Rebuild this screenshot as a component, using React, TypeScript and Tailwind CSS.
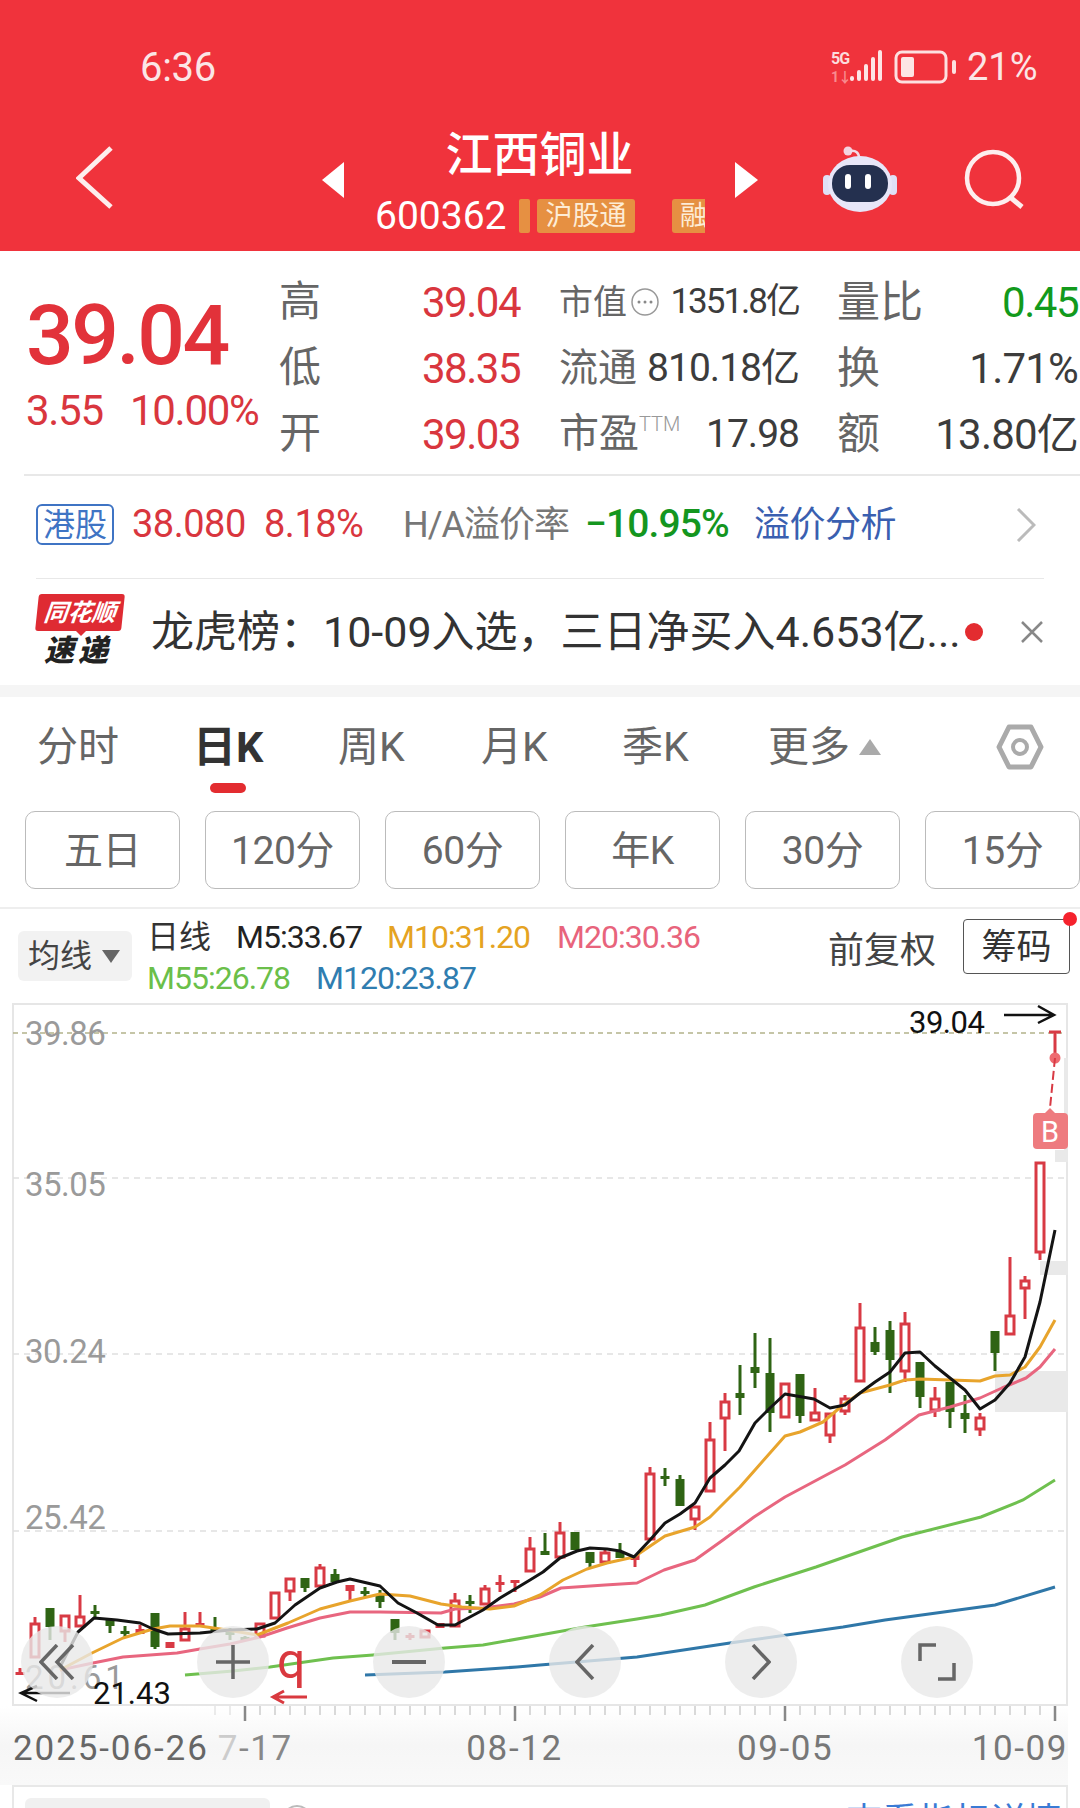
import type { ReactNode } from "react";

type Candle = [number, "r" | "g", number, number, number, number];

// wick top, body top, body bottom, wick bottom (page y). x = 20 + 15 * k
const candles: Candle[] = [
  [0, "r", 1668, 1672, 1675, 1675],
  [1, "r", 1617, 1623, 1658, 1658],
  [2, "g", 1608, 1608, 1627, 1640],
  [3, "r", 1615, 1615, 1632, 1642],
  [4, "r", 1595, 1616, 1627, 1627],
  [5, "g", 1605, 1611, 1613, 1618],
  [6, "g", 1619, 1619, 1626, 1633],
  [7, "g", 1626, 1631, 1633, 1637],
  [8, "r", 1625, 1629, 1634, 1634],
  [9, "g", 1613, 1613, 1647, 1649],
  [10, "r", 1642, 1642, 1648, 1648],
  [11, "r", 1612, 1628, 1641, 1641],
  [12, "r", 1612, 1623, 1625, 1625],
  [13, "g", 1617, 1628, 1630, 1630],
  [14, "g", 1628, 1632, 1635, 1640],
  [15, "g", 1636, 1637, 1639, 1640],
  [16, "r", 1623, 1623, 1637, 1637],
  [17, "r", 1592, 1592, 1619, 1619],
  [18, "r", 1578, 1578, 1592, 1601],
  [19, "g", 1578, 1578, 1588, 1592],
  [20, "r", 1564, 1567, 1587, 1587],
  [21, "g", 1569, 1574, 1582, 1582],
  [22, "r", 1585, 1585, 1591, 1600],
  [23, "g", 1587, 1591, 1593, 1597],
  [24, "g", 1590, 1595, 1602, 1608],
  [25, "g", 1619, 1619, 1633, 1640],
  [26, "r", 1633, 1635, 1638, 1640],
  [27, "r", 1630, 1630, 1638, 1638],
  [28, "r", 1623, 1623, 1628, 1628],
  [29, "r", 1593, 1600, 1627, 1627],
  [30, "g", 1595, 1601, 1603, 1613],
  [31, "r", 1585, 1588, 1605, 1605],
  [32, "r", 1575, 1582, 1584, 1592],
  [33, "r", 1580, 1580, 1582, 1592],
  [34, "r", 1537, 1548, 1572, 1572],
  [35, "g", 1533, 1551, 1555, 1555],
  [36, "r", 1522, 1532, 1558, 1558],
  [37, "g", 1532, 1532, 1550, 1550],
  [38, "g", 1552, 1552, 1563, 1567],
  [39, "r", 1548, 1552, 1563, 1563],
  [40, "g", 1543, 1552, 1558, 1558],
  [41, "r", 1555, 1555, 1560, 1567],
  [42, "r", 1467, 1473, 1540, 1540],
  [43, "g", 1468, 1476, 1478, 1486],
  [44, "g", 1475, 1479, 1506, 1506],
  [45, "r", 1506, 1506, 1520, 1530],
  [46, "r", 1422, 1439, 1492, 1492],
  [47, "r", 1393, 1401, 1419, 1451],
  [48, "g", 1365, 1393, 1398, 1415],
  [49, "g", 1333, 1367, 1373, 1388],
  [50, "g", 1338, 1373, 1413, 1432],
  [51, "r", 1383, 1383, 1418, 1418],
  [52, "g", 1374, 1374, 1416, 1423],
  [53, "r", 1388, 1412, 1421, 1421],
  [54, "r", 1413, 1413, 1436, 1443],
  [55, "r", 1395, 1398, 1412, 1415],
  [56, "r", 1303, 1327, 1382, 1382],
  [57, "g", 1327, 1342, 1352, 1355],
  [58, "g", 1321, 1330, 1360, 1393],
  [59, "r", 1312, 1323, 1372, 1382],
  [60, "g", 1362, 1362, 1397, 1408],
  [61, "r", 1387, 1398, 1411, 1417],
  [62, "g", 1382, 1382, 1412, 1428],
  [63, "g", 1395, 1413, 1419, 1433],
  [64, "r", 1413, 1417, 1430, 1436],
  [65, "g", 1331, 1331, 1353, 1371],
  [66, "r", 1257, 1315, 1335, 1335],
  [67, "r", 1276, 1280, 1289, 1319],
  [68, "r", 1162, 1162, 1253, 1260],
];

const ma5 = "60,1667 78,1632 94,1618 117,1620 140,1623 153,1629 168,1634 200,1633 230,1630 257,1629 275,1623 295,1605 320,1588 337,1582 350,1579 380,1586 398,1603 417,1613 438,1625 455,1625 483,1610 500,1598 530,1580 543,1572 560,1558 577,1551 590,1548 607,1549 620,1551 634,1557 650,1540 665,1523 680,1514 695,1503 710,1478 725,1465 739,1451 755,1423 770,1408 785,1394 814,1399 830,1408 845,1405 860,1393 875,1382 890,1372 905,1353 920,1352 935,1366 950,1378 965,1390 980,1409 995,1400 1010,1383 1025,1357 1040,1302 1055,1230";
const ma10 = "60,1670 92,1653 123,1638 153,1629 170,1626 200,1626 227,1630 257,1635 288,1623 320,1609 350,1601 380,1594 410,1596 441,1604 462,1607 490,1609 514,1606 540,1595 563,1580 587,1569 607,1563 634,1557 665,1536 695,1527 710,1517 740,1487 755,1470 785,1436 800,1432 823,1422 843,1405 860,1393 890,1385 905,1380 920,1379 950,1380 980,1381 995,1376 1010,1375 1025,1367 1040,1347 1055,1320";
const ma20 = "60,1670 93,1663 123,1657 177,1653 200,1649 230,1644 260,1637 287,1628 320,1618 350,1612 380,1612 441,1613 455,1609 483,1608 514,1604 540,1597 561,1588 605,1585 637,1583 664,1570 695,1560 723,1540 754,1517 785,1497 845,1465 885,1440 919,1415 950,1407 980,1398 1002,1388 1026,1378 1040,1367 1055,1349";
const ma55 = "185,1675 233,1671 270,1667 333,1658 373,1655 445,1648 483,1645 540,1635 585,1627 637,1619 661,1615 705,1605 754,1587 816,1567 902,1537 981,1517 1023,1500 1055,1480";
const ma120 = "365,1675 445,1672 517,1667 540,1665 637,1657 730,1643 843,1627 885,1620 995,1605 1055,1587";

const priceLabels: [string, number, string][] = [
  ["39.86", 1045, "#9a9a9a"],
  ["35.05", 1196, "#9a9a9a"],
  ["30.24", 1363, "#9a9a9a"],
  ["25.42", 1529, "#9a9a9a"],
];

function CandleMark({ c }: { c: Candle }) {
  const [k, kind, hi, top, bottom, lo] = c;
  const x = 20 + 15 * k;
  const color = kind === "r" ? "#d83a44" : "#2f6414";
  const flat = bottom - top < 8;
  return (
    <g>
      <line x1={x} x2={x} y1={hi} y2={lo} stroke={color} strokeWidth={3} />
      {kind === "g" || flat ? (
        <rect x={x - 4.5} y={top} width={9} height={Math.max(bottom - top, 3)} fill={color} />
      ) : (
        <rect x={x - 4} y={top + 1} width={8} height={bottom - top - 2} fill="#fff" stroke={color} strokeWidth={3} />
      )}
    </g>
  );
}

function StatRow({ label, value, mid, right }: { label: string; value: string; mid: ReactNode; right: ReactNode }) {
  return (
    <div className="flex h-[66px] items-center">
      <span className="w-[143px] text-[42px] leading-none text-[#666]">{label}</span>
      <span className="w-[137px] text-[42px] tracking-[-1.5px] text-[#d9363e]">{value}</span>
      <div className="flex w-[240px] items-center justify-between">{mid}</div>
      <div className="ml-[38px] flex w-[241px] items-center justify-between">{right}</div>
    </div>
  );
}

function StatusBar() {
  return (
    <div className="flex h-[40px] items-center pl-[140px] text-[#fbe6e6]">
      <span className="mt-[2px] w-[689px] text-[40px] leading-none tracking-[-0.3px]">6:36</span>
      <svg width="56" height="34" viewBox="0 0 56 34" className="ml-[1px]">
        <text x="1" y="14" fontSize="16" fontWeight="700" fill="#fbdcdc" letterSpacing="-1">5G</text>
        <text x="1" y="32" fontSize="14" fontWeight="700" fill="#f88b8f" letterSpacing="-1">1↓</text>
        <g fill="#fde5e5">
          <rect x="20" y="26" width="4" height="5" rx="2" />
          <rect x="27" y="20" width="4" height="11" rx="2" />
          <rect x="34" y="14" width="4" height="17" rx="2" />
          <rect x="41" y="7" width="4" height="24" rx="2" />
          <rect x="48" y="0" width="4" height="31" rx="2" />
        </g>
      </svg>
      <svg width="66" height="36" viewBox="0 0 66 36" className="ml-[8px]">
        <rect x="2" y="3" width="50" height="30" rx="6" fill="none" stroke="#fde0e0" strokeWidth="3" />
        <rect x="7" y="8" width="13" height="20" rx="2" fill="#fde5e5" />
        <rect x="58" y="11" width="4" height="14" rx="2" fill="#fde0e0" />
      </svg>
      <span className="ml-[7px] text-[38px] leading-none">21%</span>
    </div>
  );
}

function NavBar() {
  return (
    <div className="mt-[13px] flex h-[151px]">
      <svg width="37" height="63" viewBox="0 0 37 63" className="ml-[76px] mt-[46px]">
        <path d="M35 2 L3 32 L35 61" fill="none" stroke="#fdeeee" strokeWidth="5" />
      </svg>
      <svg width="22" height="36" viewBox="0 0 22 36" className="ml-[209px] mt-[62px]">
        <path d="M22 0 V36 L0 18 Z" fill="#fff" />
      </svg>
      <div className="w-[391px]">
        <div className="mt-[31px] text-center text-[47px] font-medium leading-none text-white">江西铜业</div>
        <div className="mt-[21px] flex h-[34px] items-center pl-[31px]">
          <span className="w-[144px] text-[39px] leading-none text-white">600362</span>
          <span className="h-[34px] w-[11px] rounded-[2px] bg-[#e69042]" />
          <span className="ml-[7px] flex h-[34px] w-[98px] items-center justify-center rounded-[3px] bg-[#e69042] text-[27px] text-[#fdecd6]">
            沪股通
          </span>
          <span className="ml-[37px] flex h-[34px] w-[33px] items-center overflow-hidden rounded-l-[3px] bg-[#e69042] pl-[8px] text-[27px] text-[#fdecd6]">
            <span className="shrink-0">融</span>
          </span>
        </div>
      </div>
      <svg width="23" height="36" viewBox="0 0 23 36" className="mt-[62px]">
        <path d="M0 0 V36 L23 18 Z" fill="#fff" />
      </svg>
      <svg width="76" height="68" viewBox="0 0 76 68" className="ml-[64px] mt-[45px]">
        <circle cx="26" cy="6" r="4.5" fill="#f3d4e0" />
        <path d="M28 6 C34 5 37 8 37 13" fill="none" stroke="#f3dbe6" strokeWidth="2.5" />
        <rect x="1" y="30" width="8" height="20" rx="4" fill="#dfe0f6" />
        <rect x="67" y="30" width="8" height="20" rx="4" fill="#dfe0f6" />
        <ellipse cx="38" cy="39" rx="32" ry="28" fill="#e7e6f8" />
        <rect x="10" y="20" width="56" height="37" rx="18" fill="#24304f" />
        <rect x="23" y="29" width="6" height="15" rx="3" fill="#fff" />
        <rect x="43" y="29" width="6" height="15" rx="3" fill="#fff" />
      </svg>
      <svg width="62" height="62" viewBox="0 0 62 62" className="ml-[66px] mt-[47px]">
        <circle cx="29" cy="31" r="26" fill="none" stroke="#fdeeee" strokeWidth="4.5" />
        <path d="M46 50 L58 60" stroke="#fdeeee" strokeWidth="5" />
      </svg>
    </div>
  );
}

function QuoteBlock() {
  const dark = "text-[39px] tracking-[-1px] text-[#3c3c3c]";
  return (
    <div className="flex h-[223px] pl-[26px]">
      <div className="w-[253px]">
        <div className="mt-[43px] text-[84px] font-medium leading-none tracking-[-2.5px] text-[#e2323a]">39.04</div>
        <div className="mt-[11px] flex text-[42px] leading-[44px] tracking-[-1.3px] text-[#d9363e]">
          <span className="w-[104px]">3.55</span>
          <span>10.00%</span>
        </div>
      </div>
      <div className="mt-[18px] w-[799px]">
        <StatRow
          label="高"
          value="39.04"
          mid={
            <>
              <span className="flex items-center text-[34px] text-[#666]">
                市值
                <svg width="30" height="30" viewBox="0 0 30 30" className="ml-[3px]">
                  <circle cx="15" cy="15" r="13" fill="none" stroke="#999" strokeWidth="1.5" />
                  <circle cx="9" cy="15" r="1.5" fill="#888" />
                  <circle cx="15" cy="15" r="1.5" fill="#888" />
                  <circle cx="21" cy="15" r="1.5" fill="#888" />
                </svg>
              </span>
              <span className="text-[35px] tracking-[-2px] text-[#3c3c3c]">1351.8亿</span>
            </>
          }
          right={
            <>
              <span className="text-[43px] text-[#666]">量比</span>
              <span className="text-[42px] tracking-[-1.5px] text-[#129a1c]">0.45</span>
            </>
          }
        />
        <StatRow
          label="低"
          value="38.35"
          mid={
            <>
              <span className="text-[39px] text-[#666]">流通</span>
              <span className={dark}>810.18亿</span>
            </>
          }
          right={
            <>
              <span className="text-[43px] text-[#666]">换</span>
              <span className="text-[42px] tracking-[-0.8px] text-[#3c3c3c]">1.71%</span>
            </>
          }
        />
        <StatRow
          label="开"
          value="39.03"
          mid={
            <>
              <span className="flex items-start text-[40px] leading-none text-[#666]">
                市盈
                <span className="text-[20px] font-light text-[#999]">TTM</span>
              </span>
              <span className={dark}>17.98</span>
            </>
          }
          right={
            <>
              <span className="text-[43px] text-[#666]">额</span>
              <span className="text-[42px] tracking-[-0.8px] text-[#3c3c3c]">13.80亿</span>
            </>
          }
        />
      </div>
    </div>
  );
}

function HkRow() {
  return (
    <div className="flex h-[102px] items-center pb-[5px] pl-[36px]">
      <span className="flex h-[41px] w-[78px] items-center justify-center rounded-[6px] border-2 border-[#3f74c4] text-[32px] leading-none text-[#3f74c4]">
        港股
      </span>
      <span className="ml-[18px] w-[132px] text-[38px] tracking-[-0.5px] text-[#d9363e]">38.080</span>
      <span className="w-[139px] text-[38px] tracking-[-0.5px] text-[#d9363e]">8.18%</span>
      <span className="w-[182px] whitespace-nowrap text-[36px] tracking-[-1px] text-[#777]">H/A溢价率</span>
      <span className="w-[169px] text-[39px] font-medium tracking-[-0.9px] text-[#14961f]">−10.95%</span>
      <span className="w-[262px] text-[36px] tracking-[-0.5px] text-[#3a5fb0]">溢价分析</span>
      <svg width="20" height="34" viewBox="0 0 20 34">
        <path d="M2 1 L18 17 L2 33" fill="none" stroke="#bbb" strokeWidth="3" />
      </svg>
    </div>
  );
}

function NewsRow() {
  return (
    <div className="flex h-[106px] items-center pl-[37px]">
      <div className="relative h-[76px] w-[90px] shrink-0">
        <div className="flex h-[37px] w-[86px] -skew-x-6 items-center justify-center rounded-[3px] bg-[#df2b33] text-[24px] font-bold italic leading-none text-white">
          同花顺
        </div>
        <div className="absolute left-[38px] top-[36px] h-0 w-0 border-x-[6px] border-t-[6px] border-x-transparent border-t-[#df2b33]" />
        <div className="mt-[5px] pl-[7px] text-[30px] font-black italic leading-none tracking-[4px] text-[#222]">速递</div>
      </div>
      <span className="ml-[24px] w-[814px] whitespace-nowrap text-[43px] text-[#333]">龙虎榜：10-09入选，三日净买入4.653亿...</span>
      <span className="h-[18px] w-[18px] rounded-full bg-[#e32c30]" />
      <svg width="22" height="22" viewBox="0 0 22 22" className="ml-[38px]">
        <path d="M1 1 L21 21 M21 1 L1 21" stroke="#888" strokeWidth="2.5" />
      </svg>
    </div>
  );
}

function PeriodTabs() {
  const tab = "text-[41px] leading-none text-[#666]";
  return (
    <div className="relative flex h-[114px] pb-[14px]">
      <div className="flex h-[100px] w-full items-center">
        <span className={`ml-[37px] w-[156px] ${tab}`}>分时</span>
        <span className="w-[145px] text-[43px] font-bold leading-none text-[#333]">日K</span>
        <span className={`w-[143px] ${tab}`}>周K</span>
        <span className={`w-[141px] ${tab}`}>月K</span>
        <span className={`w-[146px] ${tab}`}>季K</span>
        <span className={`w-[91px] ${tab}`}>更多</span>
        <span className="h-0 w-0 border-x-[11px] border-b-[16px] border-x-transparent border-b-[#aaa]" />
        <svg width="48" height="46" viewBox="0 0 48 46" className="ml-[115px]">
          <path d="M13 3 H35 L45 23 L35 43 H13 L3 23 Z" fill="none" stroke="#aaa" strokeWidth="5" strokeLinejoin="round" />
          <circle cx="24" cy="23" r="7" fill="none" stroke="#aaa" strokeWidth="4" />
        </svg>
      </div>
      <span className="absolute left-[210px] top-[86px] h-[10px] w-[36px] rounded-full bg-[#e32c30]" />
    </div>
  );
}

function IntervalButtons() {
  return (
    <div className="flex gap-[25px] pl-[25px]">
      {["五日", "120分", "60分", "年K", "30分", "15分"].map((t) => (
        <div
          key={t}
          className="flex h-[78px] w-[155px] shrink-0 items-center justify-center rounded-[10px] border border-[#bbb] pt-[3px] text-[39px] tracking-[-0.5px] text-[#666]"
        >
          {t}
        </div>
      ))}
    </div>
  );
}

function IndicatorBar() {
  return (
    <div className="mt-[18px] flex h-[96px] border-t-2 border-[#eee] text-[32px] tracking-[-1px]">
      <div className="ml-[18px] mt-[22px] flex h-[50px] w-[114px] items-center rounded-[6px] bg-[#f2f2f2] pl-[10px]">
        <span className="w-[74px] text-[32px] tracking-normal text-[#444]">均线</span>
        <span className="h-0 w-0 border-x-[9px] border-t-[13px] border-x-transparent border-t-[#666]" />
      </div>
      <div className="ml-[15px] mt-[8px] w-[562px]">
        <div className="flex leading-[40px]">
          <span className="w-[89px] text-[32px] tracking-normal text-[#333]">日线</span>
          <span className="w-[151px] text-[#222]">M5:33.67</span>
          <span className="w-[170px] text-[#e5a322]">M10:31.20</span>
          <span className="text-[#e8647c]">M20:30.36</span>
        </div>
        <div className="flex leading-[42px]">
          <span className="w-[169px] text-[#6bbf4a]">M55:26.78</span>
          <span className="text-[#2f7db0]">M120:23.87</span>
        </div>
      </div>
      <span className="ml-[119px] mt-[15px] text-[36px] tracking-normal text-[#444]">前复权</span>
      <div className="relative ml-[27px] mt-[10px] flex h-[55px] w-[107px] items-center justify-center rounded-[4px] border border-[#555] pt-[3px] text-[35px] tracking-normal text-[#333]">
        筹码
        <span className="absolute -right-[8px] -top-[8px] h-[14px] w-[14px] rounded-full bg-[#f5222d]" />
      </div>
    </div>
  );
}

function ChartButton({ left, children }: { left: string; children: ReactNode }) {
  return (
    <div className={`absolute top-[623px] flex h-[72px] w-[72px] items-center justify-center rounded-full bg-[#e8e8e8]/80 ${left}`}>
      {children}
    </div>
  );
}

function Chart() {
  return (
    <div className="relative h-[703px] w-[1080px]">
      <svg width="1080" height="703" viewBox="0 1003 1080 703" className="block">
        <path d="M13 1706 V1004 H1067 V1706 M13 1705 H1067" fill="none" stroke="#e6e6e6" strokeWidth="2" />
        {[1178, 1354, 1531].map((y) => (
          <line key={y} x1="13" x2="1066" y1={y} y2={y} stroke="#e0e0e0" strokeWidth="1.5" strokeDasharray="6 5" />
        ))}
        <g fill="#e9e9e9">
          <rect x="1064" y="1058" width="4" height="104" />
          <rect x="1055" y="1150" width="13" height="12" />
          <rect x="1040" y="1261" width="28" height="14" />
          <rect x="995" y="1371" width="73" height="41" />
        </g>
        <line x1="13" x2="1066" y1="1033" y2="1033" stroke="#b3b38a" strokeWidth="1.5" strokeDasharray="5 4" />
        {priceLabels.map(([t, y, c]) => (
          <text key={t} x="25" y={y} fontSize="33" fill={c} letterSpacing="-0.5">
            {t}
          </text>
        ))}
        <text x="25" y="1689" fontSize="33" fill="#9a9a9a" letterSpacing="4">
          20.61
        </text>
        {candles.map((c) => (
          <CandleMark key={c[0]} c={c} />
        ))}
        <polyline points={ma120} fill="none" stroke="#2f77a8" strokeWidth="3" />
        <polyline points={ma55} fill="none" stroke="#6fc04f" strokeWidth="3" />
        <polyline points={ma20} fill="none" stroke="#e8667f" strokeWidth="3" strokeLinejoin="round" />
        <polyline points={ma10} fill="none" stroke="#e8a42c" strokeWidth="3" strokeLinejoin="round" />
        <polyline points={ma5} fill="none" stroke="#141414" strokeWidth="3" strokeLinejoin="round" />
        {/* last bar with its buy mark */}
        <path d="M1049 1032 H1061 M1055 1032 V1058" stroke="#d83a44" strokeWidth="3" fill="none" />
        <circle cx="1055" cy="1058" r="5.5" fill="#ee6a70" />
        <path d="M1055 1058 L1050 1108" stroke="#d83a44" strokeWidth="2" strokeDasharray="9 4" />
        <path d="M1045 1113 L1050 1108 L1055 1113 Z" fill="#ee7b7f" />
        <rect x="1033" y="1113" width="35" height="36" rx="4" fill="#ee7b7f" />
        <text x="1041" y="1142" fontSize="29" fill="#fff">
          B
        </text>
        <text x="909" y="1033" fontSize="31" fill="#111" letterSpacing="-0.5">
          39.04
        </text>
        <path d="M1004 1015 H1054 M1038 1006 L1054 1015 L1038 1023" fill="none" stroke="#111" strokeWidth="2.5" />
        <text x="93" y="1704" fontSize="31" fill="#111">
          21.43
        </text>
        <path d="M70 1693 H21 M37 1686 L21 1693 L37 1701" fill="none" stroke="#111" strokeWidth="2.5" />
        {/* hand marks on the shot */}
        <text x="277" y="1678" fontSize="50" fill="#d9393f">
          q
        </text>
        <path d="M307 1697 H274 M284 1691 L273 1697 L284 1703" fill="none" stroke="#d9393f" strokeWidth="3" />
      </svg>
      <ChartButton left="left-[21px]">
        <svg width="36" height="36" viewBox="0 0 36 36">
          <path d="M18 1 L2 18 L18 35 M34 1 L18 18 L34 35" fill="none" stroke="#666" strokeWidth="3.5" />
        </svg>
      </ChartButton>
      <ChartButton left="left-[197px]">
        <svg width="36" height="36" viewBox="0 0 36 36">
          <path d="M18 1 V35 M1 18 H35" stroke="#666" strokeWidth="3.5" />
        </svg>
      </ChartButton>
      <ChartButton left="left-[373px]">
        <svg width="36" height="6" viewBox="0 0 36 6">
          <path d="M1 3 H35" stroke="#666" strokeWidth="4" />
        </svg>
      </ChartButton>
      <ChartButton left="left-[549px]">
        <svg width="20" height="36" viewBox="0 0 20 36">
          <path d="M18 1 L2 18 L18 35" fill="none" stroke="#666" strokeWidth="3.5" />
        </svg>
      </ChartButton>
      <ChartButton left="left-[725px]">
        <svg width="20" height="36" viewBox="0 0 20 36">
          <path d="M2 1 L18 18 L2 35" fill="none" stroke="#666" strokeWidth="3.5" />
        </svg>
      </ChartButton>
      <ChartButton left="left-[901px]">
        <svg width="38" height="38" viewBox="0 0 38 38">
          <path d="M2 18 V2 H18 M36 20 V36 H20" fill="none" stroke="#666" strokeWidth="3.5" />
        </svg>
      </ChartButton>
    </div>
  );
}

function TimeAxis() {
  const ticks = Array.from({ length: 57 }, (_, i) => 215 + 15 * i);
  return (
    <div className="h-[79px] w-[1068px] bg-gradient-to-b from-white via-[#f6f6f6] to-[#f9f9f9]">
      <svg width="1068" height="16" viewBox="0 0 1068 16" className="block">
        {ticks.map((x, i) => {
          const major = (x - 245) % 270 === 0;
          return (
            <line
              key={x}
              x1={x}
              x2={x}
              y1="0"
              y2={major ? 15 : 9}
              stroke={major ? "#888" : "#ccc"}
              strokeWidth={major ? 2.5 : 1.5}
              opacity={i < 2 ? 0.5 : 1}
            />
          );
        })}
      </svg>
      <div className="mt-[5px] flex pl-[13px] text-[35px] leading-[44px] tracking-[1.6px] text-[#777]">
        <span className="w-[205px] whitespace-nowrap tracking-[1.9px] text-[#666]">2025-06-26</span>
        <span className="w-[249px] whitespace-nowrap text-[#888]">
          <span className="text-[#ccc]">7</span>-17
        </span>
        <span className="w-[271px] whitespace-nowrap">08-12</span>
        <span className="w-[235px] whitespace-nowrap">09-05</span>
        <span className="whitespace-nowrap">10-09</span>
      </div>
    </div>
  );
}

function NextPanel() {
  return (
    <div className="relative ml-[12px] h-[23px] w-[1056px] overflow-hidden border-x-2 border-t-2 border-[#e8e8e8]">
      <div className="absolute bottom-0 left-[11px] h-[10px] w-[245px] rounded-t-[6px] bg-[#f0f0f0]" />
      <div className="absolute left-[268px] top-[18px] h-[30px] w-[30px] rounded-full border-2 border-[#bbb]" />
      <span className="absolute left-[832px] top-[17px] whitespace-nowrap text-[36px] leading-none text-[#3a7bd5]">查看指标详情</span>
    </div>
  );
}

export default function App() {
  return (
    <div className="h-[1808px] w-[1080px] overflow-hidden bg-white font-['Roboto','Noto_Sans_CJK_SC',sans-serif]">
      <header className="h-[251px] bg-[#f0333c] pt-[47px]">
        <StatusBar />
        <NavBar />
      </header>
      <QuoteBlock />
      <div className="ml-[24px] h-[2px] bg-[#e8e8e8]" />
      <HkRow />
      <div className="mx-[36px] h-[1px] bg-[#e8e8e8]" />
      <NewsRow />
      <div className="h-[12px] bg-[#f5f5f5]" />
      <PeriodTabs />
      <IntervalButtons />
      <IndicatorBar />
      <Chart />
      <TimeAxis />
      <NextPanel />
    </div>
  );
}
